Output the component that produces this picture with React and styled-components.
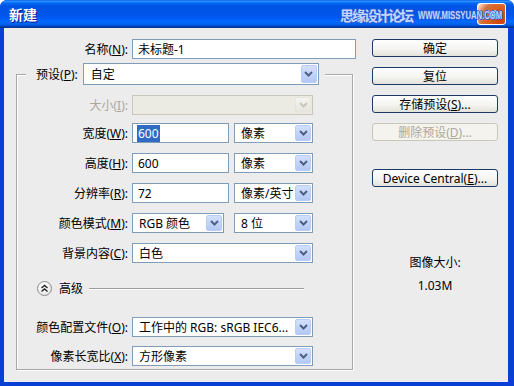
import React from 'react'
import styled, { createGlobalStyle } from 'styled-components'

const GlobalStyle = createGlobalStyle`
  html, body {
    margin: 0;
    padding: 0;
    background: #fff;
  }
  body {
    font-family: "Noto Sans", "Noto Sans CJK SC", sans-serif;
    font-size: 12px;
    color: #000;
  }
`

const Window = styled.div`
  position: relative;
  width: 514px;
  height: 386px;
  display: flex;
  flex-direction: column;
  background: #0a3fd6;
  border-radius: 7px 7px 0 0;
  overflow: hidden;
`

const TitleBar = styled.div`
  height: 28px;
  flex-shrink: 0;
  display: flex;
  align-items: center;
  padding: 0 8px 0 9px;
  background: linear-gradient(
    180deg,
    #0058ee 0%,
    #3593ff 4%,
    #288eff 6%,
    #127dff 8%,
    #036ffc 10%,
    #0262ee 14%,
    #0057e5 20%,
    #0054e3 24%,
    #0055eb 56%,
    #005bf5 66%,
    #026afe 76%,
    #0062ef 86%,
    #0052d6 92%,
    #0040ab 94%,
    #003092 100%
  );
`

const Title = styled.div`
  flex: 1;
  color: #fff;
  font-family: "Noto Sans CJK SC", sans-serif;
  font-weight: bold;
  font-size: 14px;
  text-shadow: 1px 1px #0f1089;
`

const CloseButton = styled.div`
  width: 27px;
  height: 20px;
  border: 1px solid #fff;
  border-radius: 3px;
  display: flex;
  align-items: center;
  justify-content: center;
  background: radial-gradient(circle at 85% 85%, #cc4600 0%, #dc6527 55%, #cd7546 70%, #ffccb2 92%, #fff 100%);
`

const Watermark = styled.div`
  position: absolute;
  left: 340px;
  top: 4px;
  width: 200px;
  height: 22px;
  display: flex;
  align-items: center;
  white-space: nowrap;
  pointer-events: none;
`

const WatermarkCn = styled.span`
  flex-shrink: 0;
  font-family: "Noto Sans CJK SC", sans-serif;
  font-size: 14px;
  font-weight: bold;
  letter-spacing: -2px;
  color: #c3d8ff;
  text-shadow: 1px 0 #2a5bd8, -1px 0 #2a5bd8, 0 1px #2a5bd8, 0 -1px #2a5bd8;
`

const WatermarkEn = styled.span`
  flex-shrink: 0;
  margin-left: 6px;
  font-family: "Liberation Sans", sans-serif;
  font-size: 11px;
  font-weight: bold;
  color: #c3d8ff;
  text-shadow: 1px 0 #2a5bd8, -1px 0 #2a5bd8, 0 1px #2a5bd8, 0 -1px #2a5bd8;
  transform: scaleX(0.7);
  transform-origin: left center;
`

const Body = styled.div`
  flex: 1;
  display: flex;
  margin: 0 6px 4px 4px;
  background: #ececec;
`

const LeftCol = styled.div`
  width: 340px;
  flex-shrink: 0;
  padding: 11px 0 0 12px;
`

const RightCol = styled.div`
  width: 126px;
  margin-left: 16px;
  padding-top: 11px;
  display: flex;
  flex-direction: column;
`

const Row = styled.div`
  display: flex;
  align-items: center;
  height: ${({ $h }) => $h || 20}px;
  margin-top: ${({ $mt }) => $mt || 0}px;
`

const Label = styled.span`
  width: ${({ $w }) => ($w ? `${$w}px` : 'auto')};
  flex-shrink: 0;
  margin-right: ${({ $gap }) => $gap ?? 4}px;
  text-align: right;
  white-space: nowrap;
  color: ${({ $disabled }) => ($disabled ? '#aca899' : '#000')};
`

const TextBox = styled.div`
  width: ${({ $w }) => $w}px;
  height: 20px;
  box-sizing: border-box;
  border: 1px solid #7f9db9;
  background: #fff;
  padding-left: 5px;
  display: flex;
  align-items: center;
  white-space: nowrap;
`

const Selected = styled.span`
  background: #316ac5;
  color: #fff;
  padding: 0 1px;
  margin-left: -1px;
`

const SelectBox = styled.div`
  width: ${({ $w }) => $w}px;
  height: ${({ $h }) => $h || 20}px;
  box-sizing: border-box;
  border: 1px solid ${({ $disabled }) => ($disabled ? '#c9c7ba' : '#7f9db9')};
  background: ${({ $disabled }) => ($disabled ? '#ebebe4' : '#fff')};
  padding-left: ${({ $pad }) => $pad ?? 6}px;
  display: flex;
  align-items: center;
  white-space: nowrap;
  overflow: hidden;
`

const SelectText = styled.span`
  flex: 1;
  overflow: hidden;
`

const ArrowBox = styled.span`
  width: 16px;
  align-self: stretch;
  margin: 1px 1px 1px 0;
  box-sizing: border-box;
  border: 1px solid ${({ $disabled }) => ($disabled ? '#e6e5dc' : '#b8cdf6')};
  border-radius: 2px;
  background: ${({ $disabled }) =>
    $disabled ? 'linear-gradient(#f4f4f0, #e6e5de)' : 'linear-gradient(#d3e0fd, #b3c8f5)'};
  display: flex;
  align-items: center;
  justify-content: center;
`

const Group = styled.fieldset`
  margin: 4px 0 0 0;
  width: 337px;
  box-sizing: border-box;
  min-inline-size: 0;
  border: 1px solid #a8a8a8;
  box-shadow: inset 1px 1px #fff, 1px 1px #fff;
  padding: 10px 0 3px 9px;
`

const Legend = styled.legend`
  padding: 0 6px 0 10px;
  background: #ececec;
`

const LegendInner = styled.div`
  display: flex;
  align-items: center;
  height: 22px;
`

const Advanced = styled.div`
  display: flex;
  align-items: center;
  height: 20px;
  margin-top: 15px;
  padding-left: 11px;
`

const CollapseIcon = styled.span`
  width: 15px;
  height: 15px;
  box-sizing: border-box;
  border: 1px solid #8c8c8c;
  border-radius: 50%;
  background: radial-gradient(circle at 40% 35%, #fff 0%, #f2f2f2 50%, #d9d9d9 100%);
  display: flex;
  align-items: center;
  justify-content: center;
`

const AdvancedText = styled.span`
  margin-left: 7px;
`

const Separator = styled.span`
  margin-left: 6px;
  width: 215px;
  height: 1px;
  background: #9d9d9d;
  box-shadow: 0 1px #fff;
`

const Button = styled.div`
  height: 18px;
  margin-top: ${({ $mt }) => $mt ?? 10}px;
  box-sizing: border-box;
  border: 1px solid ${({ $disabled }) => ($disabled ? '#c9c7ba' : '#1c3a66')};
  border-radius: 3px;
  background: ${({ $disabled }) =>
    $disabled ? '#f4f3ee' : 'linear-gradient(180deg, #ffffff 0%, #f3f3ef 60%, #e3e1da 100%)'};
  color: ${({ $disabled }) => ($disabled ? '#aca899' : '#000')};
  display: flex;
  align-items: center;
  justify-content: center;
  white-space: nowrap;
`

const Info = styled.div`
  margin-top: 68px;
  display: flex;
  flex-direction: column;
  align-items: center;
  gap: 7px;
  line-height: 16px;
`

const Chevron = ({ disabled }) => (
  <svg width="9" height="6" viewBox="0 0 9 6">
    <path d="M1 1 L4.5 4.5 L8 1" fill="none" stroke={disabled ? '#c9c7ba' : '#4d6185'} strokeWidth="2" />
  </svg>
)

const Select = ({ w, h, pad, disabled, children }) => (
  <SelectBox $w={w} $h={h} $pad={pad} $disabled={disabled}>
    <SelectText>{children}</SelectText>
    <ArrowBox $disabled={disabled}>
      <Chevron disabled={disabled} />
    </ArrowBox>
  </SelectBox>
)

const Key = ({ label, k, tail = '):' }) => (
  <>
    {label}(<u>{k}</u>{tail}
  </>
)

export default function App() {
  return (
    <>
      <GlobalStyle />
      <Window>
        <TitleBar>
          <Title>新建</Title>
          <CloseButton>
            <svg width="11" height="11" viewBox="0 0 11 11">
              <path d="M1.5 1.5 L9.5 9.5 M9.5 1.5 L1.5 9.5" stroke="#fff" strokeWidth="2" />
            </svg>
          </CloseButton>
        </TitleBar>
        <Watermark>
          <WatermarkCn>思缘设计论坛</WatermarkCn>
          <WatermarkEn>WWW.MISSYUAN.COM</WatermarkEn>
        </Watermark>
        <Body>
          <LeftCol>
            <Row>
              <Label $w={112}>
                <Key label="名称" k="N" />
              </Label>
              <TextBox $w={224}>未标题-1</TextBox>
            </Row>
            <Group>
              <Legend>
                <LegendInner>
                  <Label $gap={5}>
                    <Key label="预设" k="P" />
                  </Label>
                  <Select w={236} h={22} pad={7}>
                    自定
                  </Select>
                </LegendInner>
              </Legend>
              <Row>
                <Label $w={102} $disabled>
                  <Key label="大小" k="I" />
                </Label>
                <Select w={181} disabled />
              </Row>
              <Row $mt={8}>
                <Label $w={102}>
                  <Key label="宽度" k="W" />
                </Label>
                <TextBox $w={97}>
                  <Selected>600</Selected>
                </TextBox>
                <Label $gap={5} />
                <Select w={79}>像素</Select>
              </Row>
              <Row $mt={10}>
                <Label $w={102}>
                  <Key label="高度" k="H" />
                </Label>
                <TextBox $w={97}>600</TextBox>
                <Label $gap={5} />
                <Select w={79}>像素</Select>
              </Row>
              <Row $mt={10}>
                <Label $w={102}>
                  <Key label="分辨率" k="R" />
                </Label>
                <TextBox $w={97}>72</TextBox>
                <Label $gap={5} />
                <Select w={79}>像素/英寸</Select>
              </Row>
              <Row $mt={10}>
                <Label $w={102}>
                  <Key label="颜色模式" k="M" />
                </Label>
                <Select w={92}>RGB 颜色</Select>
                <Label $gap={10} />
                <Select w={79}>8 位</Select>
              </Row>
              <Row $mt={10}>
                <Label $w={102}>
                  <Key label="背景内容" k="C" />
                </Label>
                <Select w={181}>白色</Select>
              </Row>
              <Advanced>
                <CollapseIcon>
                  <svg width="9" height="9" viewBox="0 0 9 9">
                    <path d="M1.5 4 L4.5 1.5 L7.5 4 M1.5 7.5 L4.5 5 L7.5 7.5" fill="none" stroke="#222" strokeWidth="1.4" />
                  </svg>
                </CollapseIcon>
                <AdvancedText>高级</AdvancedText>
                <Separator />
              </Advanced>
              <Row $mt={19}>
                <Label $w={102}>
                  <Key label="颜色配置文件" k="O" />
                </Label>
                <Select w={181}>工作中的 RGB: sRGB IEC6...</Select>
              </Row>
              <Row $mt={9}>
                <Label $w={102}>
                  <Key label="像素长宽比" k="X" />
                </Label>
                <Select w={181}>方形像素</Select>
              </Row>
            </Group>
          </LeftCol>
          <RightCol>
            <Button $mt={0}>确定</Button>
            <Button>复位</Button>
            <Button>
              <Key label="存储预设" k="S" tail=")..." />
            </Button>
            <Button $disabled>
              <Key label="删除预设" k="D" tail=")..." />
            </Button>
            <Button $mt={28}>
              <Key label="Device Central" k="E" tail=")..." />
            </Button>
            <Info>
              <span>图像大小:</span>
              <span>1.03M</span>
            </Info>
          </RightCol>
        </Body>
      </Window>
    </>
  )
}
